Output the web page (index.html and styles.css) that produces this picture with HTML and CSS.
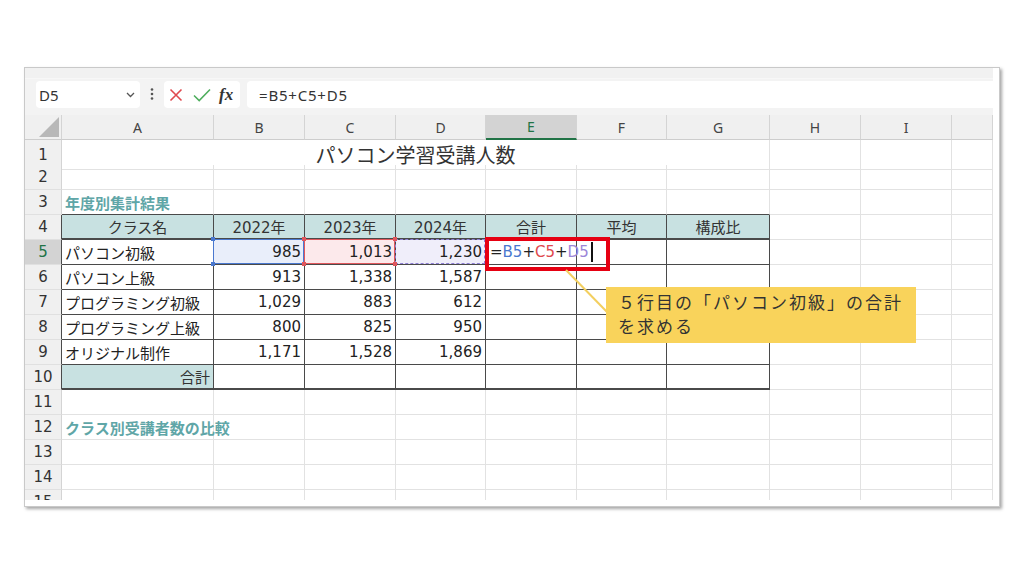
FILE: index.html
```html
<!DOCTYPE html>
<html lang="ja">
<head>
<meta charset="utf-8">
<title>Excel</title>
<link rel="stylesheet" href="styles.css">
</head>
<body>
<div class="frame">
  <div class="sheet">
    <div class="topband"></div>
    <div class="fbar">
      <div class="namebox"><span>D5</span>
        <svg class="chev" width="9" height="6" viewBox="0 0 9 6"><path d="M1 1L4.5 4.5L8 1" stroke="#555" stroke-width="1.3" fill="none"/></svg>
      </div>
      <svg class="kebab" width="4" height="12" viewBox="0 0 4 12"><circle cx="2" cy="1.5" r="1.3" fill="#555"/><circle cx="2" cy="6" r="1.3" fill="#555"/><circle cx="2" cy="10.5" r="1.3" fill="#555"/></svg>
      <div class="fbtns">
        <svg width="14" height="14" viewBox="0 0 14 14"><path d="M1.5 1.5L12.5 12.5M12.5 1.5L1.5 12.5" stroke="#e04a4f" stroke-width="1.6" fill="none"/></svg>
        <svg width="18" height="14" viewBox="0 0 18 14"><path d="M1 7.5L6.2 12.5L17 1.5" stroke="#4fae5e" stroke-width="1.6" fill="none"/></svg>
        <span class="fx">fx</span>
      </div>
      <div class="finput">=B5+C5+D5</div>
    </div>

    <div class="row colhdr">
      <div class="corner"><svg width="20" height="20" viewBox="0 0 20 20"><path d="M0 20L20 0V20Z" fill="#b8b8b8"/></svg></div>
      <div class="ch">A</div><div class="ch">B</div><div class="ch">C</div><div class="ch">D</div>
      <div class="ch sel">E</div><div class="ch">F</div><div class="ch">G</div><div class="ch">H</div>
      <div class="ch">I</div><div class="ch"></div>
    </div>

    <div class="row">
      <div class="rh">1</div>
      <div class="c title">パソコン学習受講人数</div>
      <div class="c"></div><div class="c"></div><div class="c"></div>
    </div>

    <div class="row">
      <div class="rh">2</div>
      <div class="c"></div><div class="c"></div><div class="c"></div><div class="c"></div><div class="c"></div>
      <div class="c"></div><div class="c"></div><div class="c"></div><div class="c"></div><div class="c"></div>
    </div>

    <div class="row">
      <div class="rh">3</div>
      <div class="c tb sec">年度別集計結果</div>
      <div class="c tb"></div><div class="c tb"></div><div class="c tb"></div><div class="c tb"></div>
      <div class="c tb"></div><div class="c tb"></div>
      <div class="c"></div><div class="c"></div><div class="c"></div>
    </div>

    <div class="row">
      <div class="rh rt">4</div>
      <div class="c t th hb">クラス名</div>
      <div class="c t th hb">2022年</div>
      <div class="c t th hb">2023年</div>
      <div class="c t th hb">2024年</div>
      <div class="c t th hb">合計</div>
      <div class="c t th hb">平均</div>
      <div class="c t th hb">構成比</div>
      <div class="c"></div><div class="c"></div><div class="c"></div>
    </div>

    <div class="row">
      <div class="rh rt selrow">5</div>
      <div class="c t">パソコン初級</div>
      <div class="c t num ref refb">985</div>
      <div class="c t num ref refc">1,013</div>
      <div class="c t num ref refd">1,230</div>
      <div class="c t fcell"><span class="k">=</span><span class="kb">B5</span><span class="k">+</span><span class="kc">C5</span><span class="k">+</span><span class="kd">D5</span><span class="caret"></span><div class="selbox"></div></div>
      <div class="c t"></div>
      <div class="c t"></div>
      <div class="c"></div><div class="c"></div><div class="c"></div>
    </div>

    <div class="row">
      <div class="rh rt">6</div>
      <div class="c t">パソコン上級</div>
      <div class="c t num">913</div>
      <div class="c t num">1,338</div>
      <div class="c t num">1,587</div>
      <div class="c t"></div><div class="c t"></div><div class="c t"></div>
      <div class="c"></div><div class="c"></div><div class="c"></div>
    </div>

    <div class="row">
      <div class="rh rt">7</div>
      <div class="c t">プログラミング初級</div>
      <div class="c t num">1,029</div>
      <div class="c t num">883</div>
      <div class="c t num">612</div>
      <div class="c t"></div><div class="c t"></div><div class="c t"></div>
      <div class="c"></div><div class="c"></div><div class="c"></div>
    </div>

    <div class="row">
      <div class="rh rt">8</div>
      <div class="c t">プログラミング上級</div>
      <div class="c t num">800</div>
      <div class="c t num">825</div>
      <div class="c t num">950</div>
      <div class="c t"></div><div class="c t"></div><div class="c t"></div>
      <div class="c"></div><div class="c"></div><div class="c"></div>
    </div>

    <div class="row">
      <div class="rh rt">9</div>
      <div class="c t">オリジナル制作</div>
      <div class="c t num">1,171</div>
      <div class="c t num">1,528</div>
      <div class="c t num">1,869</div>
      <div class="c t"></div><div class="c t"></div><div class="c t"></div>
      <div class="c"></div><div class="c"></div><div class="c"></div>
    </div>

    <div class="row">
      <div class="rh rt">10</div>
      <div class="c t th num hb">合計</div>
      <div class="c t hb"></div><div class="c t hb"></div><div class="c t hb"></div>
      <div class="c t hb"></div><div class="c t hb"></div><div class="c t hb"></div>
      <div class="c"></div><div class="c"></div><div class="c"></div>
    </div>

    <div class="row">
      <div class="rh">11</div>
      <div class="c"></div><div class="c"></div><div class="c"></div><div class="c"></div><div class="c"></div>
      <div class="c"></div><div class="c"></div><div class="c"></div><div class="c"></div><div class="c"></div>
    </div>

    <div class="row">
      <div class="rh">12</div>
      <div class="c sec">クラス別受講者数の比較</div>
      <div class="c"></div><div class="c"></div><div class="c"></div><div class="c"></div>
      <div class="c"></div><div class="c"></div><div class="c"></div><div class="c"></div><div class="c"></div>
    </div>

    <div class="row">
      <div class="rh">13</div>
      <div class="c"></div><div class="c"></div><div class="c"></div><div class="c"></div><div class="c"></div>
      <div class="c"></div><div class="c"></div><div class="c"></div><div class="c"></div><div class="c"></div>
    </div>

    <div class="row">
      <div class="rh">14</div>
      <div class="c"></div><div class="c"></div><div class="c"></div><div class="c"></div><div class="c"></div>
      <div class="c"></div><div class="c"></div><div class="c"></div><div class="c"></div><div class="c"></div>
    </div>

    <div class="row">
      <div class="rh">15</div>
      <div class="c"></div><div class="c"></div><div class="c"></div><div class="c"></div><div class="c"></div>
      <div class="c"></div><div class="c"></div><div class="c"></div><div class="c"></div><div class="c"></div>
    </div>
  </div>
</div>

<svg class="leader" width="60" height="60" viewBox="0 0 60 60"><path d="M6 7L48 50" stroke="#f3cf5f" stroke-width="2" fill="none"/></svg>
<div class="callout">５行目の「パソコン初級」の合計<br>を求める</div>
</body>
</html>
```

FILE: styles.css
```css
html, body {
  margin: 0;
  padding: 0;
  background: #ffffff;
}

body {
  width: 1024px;
  height: 576px;
  overflow: hidden;
  position: relative;
  font-family: "DejaVu Sans", "Noto Sans CJK JP", sans-serif;
  color: #222;
}

.frame {
  margin: 67px 0 0 24px;
  width: 976px;
  height: 440px;
  box-sizing: border-box;
  border: 1px solid #c9c9c9;
  box-shadow: 2px 2px 3px rgba(0, 0, 0, 0.35);
  background: #ffffff;
}

.sheet {
  width: 968px;
  height: 432px;
  overflow: hidden;
}

.topband {
  height: 11px;
  background: #f1f1f1;
  border-bottom: 1px solid #f7f7f7;
  box-sizing: border-box;
}

/* formula bar */
.fbar {
  height: 36px;
  box-sizing: border-box;
  padding: 2px 0 0 11px;
  background: #f3f3f3;
  display: flex;
  align-items: flex-start;
}

.namebox {
  width: 104px;
  height: 27px;
  box-sizing: border-box;
  padding: 0 5px 0 3px;
  background: #ffffff;
  border-radius: 4px;
  display: flex;
  align-items: center;
  justify-content: space-between;
  font-family: "Noto Sans", sans-serif;
  font-size: 15px;
  color: #333;
}

.chev {
  margin-top: 1px;
}

.kebab {
  margin: 7px 10px 0 10px;
}

.fbtns {
  width: 76px;
  height: 27px;
  box-sizing: border-box;
  padding-left: 5px;
  background: #ffffff;
  border-radius: 4px;
  display: flex;
  align-items: center;
  gap: 10px;
}

.fx {
  font-family: "Liberation Serif", serif;
  font-style: italic;
  font-weight: bold;
  font-size: 17px;
  color: #333;
  margin-left: -2px;
}

.finput {
  flex: 1;
  height: 27px;
  margin-left: 7px;
  box-sizing: border-box;
  padding-left: 12px;
  background: #ffffff;
  border-radius: 4px 0 0 4px;
  display: flex;
  align-items: center;
  font-family: "Noto Sans", sans-serif;
  font-size: 15px;
  letter-spacing: 0.8px;
  color: #333;
}

/* grid rows */
.row {
  display: grid;
  grid-template-columns: 37px 152px 91px 91px 90px 91px 90px 103px 91px 91px 41px;
  height: 25px;
}

.colhdr {
  background: #f0f0f0;
}

.corner {
  display: flex;
  justify-content: flex-end;
  align-items: flex-end;
  padding: 0 2px 2px 0;
  box-sizing: border-box;
  border-right: 1px solid #d4d4d4;
  border-bottom: 1px solid #cdcdcd;
}

.ch {
  box-sizing: border-box;
  border-right: 1px solid #d4d4d4;
  border-bottom: 1px solid #cdcdcd;
  display: flex;
  align-items: center;
  justify-content: center;
  font-family: "Noto Sans", sans-serif;
  font-size: 14px;
  color: #444;
}

.ch.sel {
  background: #d3d3d3;
  color: #217346;
  border-bottom: 2px solid #217346;
}

.rh {
  box-sizing: border-box;
  background: #f0f0f0;
  border-right: 1px solid #d4d4d4;
  border-bottom: 1px solid #e0e0e0;
  display: flex;
  align-items: center;
  justify-content: center;
  font-size: 15px;
  color: #333;
}

.rh.rt {
  border-right-color: #4a4a4a;
}

.rh.selrow {
  background: #d3d3d3;
  color: #217346;
}

.c {
  box-sizing: border-box;
  border-right: 1px solid #e2e2e2;
  border-bottom: 1px solid #e2e2e2;
  padding: 0 3px;
  display: flex;
  align-items: center;
  white-space: nowrap;
  font-size: 15px;
  color: #222;
}

.title {
  grid-column: 2 / span 7;
  justify-content: center;
  font-family: "Noto Sans CJK JP", sans-serif;
  font-size: 20px;
  color: #333;
}

.sec {
  font-family: "Noto Sans CJK JP", sans-serif;
  font-weight: bold;
  color: #5fa6a7;
}

.tb {
  border-bottom-color: #4a4a4a;
}

.t {
  border-right-color: #4a4a4a;
  border-bottom-color: #4a4a4a;
}

.th {
  background: #c8e1e1;
  justify-content: center;
  color: #333;
}

.hb {
  border-bottom-width: 2px;
}

.num {
  justify-content: flex-end;
}

/* formula reference highlights */
.ref {
  position: relative;
}

.ref::after {
  content: "";
  position: absolute;
  top: -1px;
  left: -1px;
  right: 0;
  bottom: 0;
  border: 1.5px solid #4a78cf;
}

.refb {
  background: #e9eefa;
}

.refb::before,
.refc::before {
  content: "";
  position: absolute;
  top: -3px;
  left: -3px;
  right: -2px;
  bottom: -2px;
  z-index: 1;
}

.refb::before {
  background:
    linear-gradient(#4a78cf, #4a78cf) 0 0 / 4px 4px no-repeat,
    linear-gradient(#4a78cf, #4a78cf) 100% 0 / 4px 4px no-repeat,
    linear-gradient(#4a78cf, #4a78cf) 0 100% / 4px 4px no-repeat,
    linear-gradient(#4a78cf, #4a78cf) 100% 100% / 4px 4px no-repeat;
}

.refc {
  background: #fce9eb;
}

.refc::after {
  border-color: #e0575c;
}

.refc::before {
  background:
    linear-gradient(#e0575c, #e0575c) 0 0 / 4px 4px no-repeat,
    linear-gradient(#e0575c, #e0575c) 100% 0 / 4px 4px no-repeat,
    linear-gradient(#e0575c, #e0575c) 0 100% / 4px 4px no-repeat,
    linear-gradient(#e0575c, #e0575c) 100% 100% / 4px 4px no-repeat;
}

.refd {
  background: #f0eefa;
}

.refd::after {
  border: 1.5px dashed #8e7fd4;
}

.fcell {
  position: relative;
  padding-left: 4px;
}

.fcell span {
  flex-shrink: 0;
}

.k { color: #222; }
.kb { color: #4a78cf; }
.kc { color: #e0484e; }
.kd { color: #9b86d8; }

.caret {
  display: block;
  width: 2px;
  height: 20px;
  margin-left: 2px;
  background: #111;
}

.selbox {
  position: absolute;
  left: -1px;
  top: -3px;
  width: 125px;
  height: 34px;
  box-sizing: border-box;
  border: 4px solid #e60012;
}

/* callout */
.leader {
  position: absolute;
  left: 560px;
  top: 263px;
  z-index: 3;
}

.callout {
  position: absolute;
  left: 606px;
  top: 287px;
  width: 310px;
  height: 56px;
  box-sizing: border-box;
  padding: 3px 0 0 12px;
  background: #f9d35b;
  font-family: "Noto Sans CJK JP", sans-serif;
  font-size: 17px;
  line-height: 24px;
  letter-spacing: 2px;
  color: #333;
  z-index: 4;
}
```
